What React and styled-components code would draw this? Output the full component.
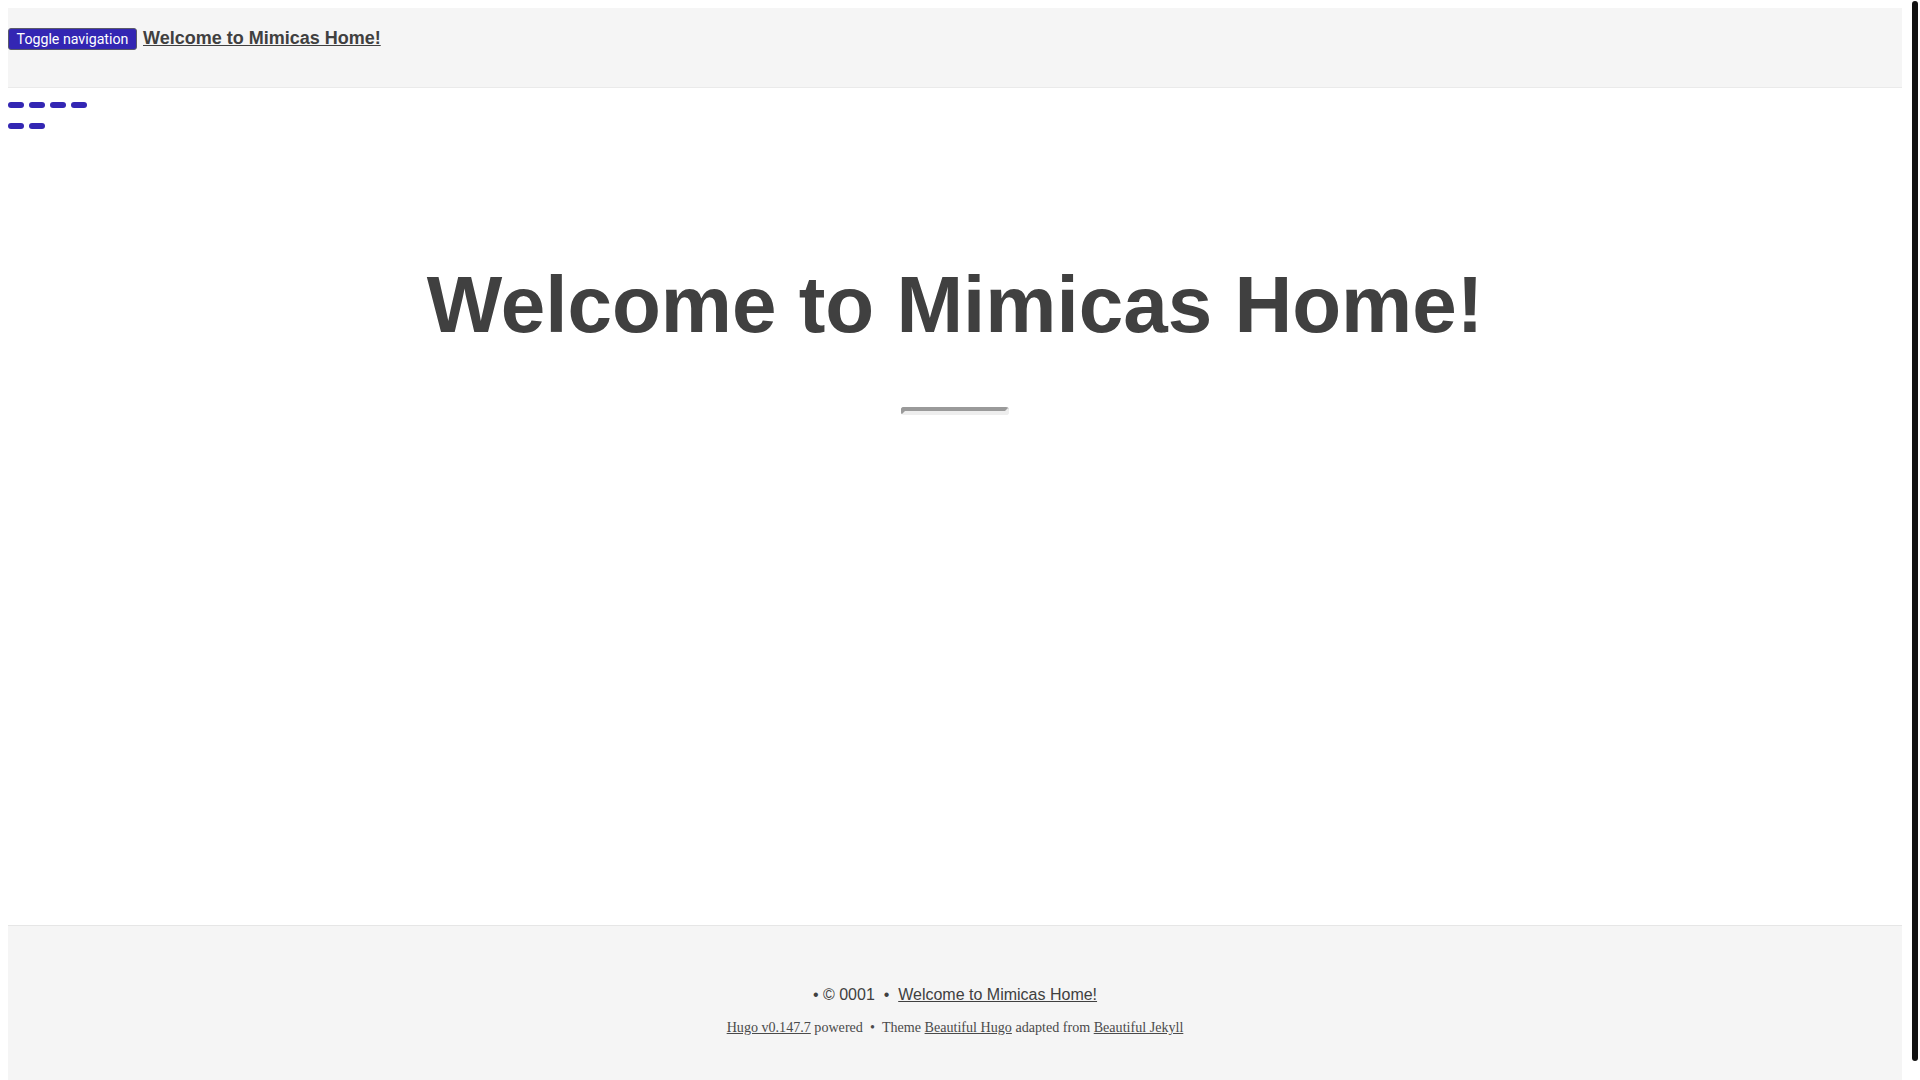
import styled, { createGlobalStyle } from "styled-components";

const GlobalStyle = createGlobalStyle`
	html {
		background: #ffffff;
	}
	body {
		margin: 8px 18px 8px 8px;
		font-family: "Liberation Sans", Arial, sans-serif;
		color: #404040;
		background: #ffffff;
	}
`;

const BLUE = "#3326b3";

export default function App() {
	const dashRows = [4, 2];

	return (
		<>
			<GlobalStyle />
			<Navbar>
				<ToggleButton type="button">Toggle navigation</ToggleButton>
				<Brand href="#">Welcome to Mimicas Home!</Brand>
			</Navbar>
			<Dashes>
				{dashRows.map((count, row) => (
					<DashRow key={row}>
						{Array.from({ length: count }).map((_, i) => (
							<Dash key={i} />
						))}
					</DashRow>
				))}
			</Dashes>
			<Intro>
				<PageHeading>Welcome to Mimicas Home!</PageHeading>
				<SmallRule />
			</Intro>
			<Footer>
				<Copyright>
					• © 0001{"\u00a0 "}•{"\u00a0 "}
					<FooterLink href="#">Welcome to Mimicas Home!</FooterLink>
				</Copyright>
				<Credits>
					<CreditLink href="#">Hugo v0.147.7</CreditLink> powered{"\u00a0 "}•{"\u00a0\u00a0"}Theme{" "}
					<CreditLink href="#">Beautiful Hugo</CreditLink> adapted from{" "}
					<CreditLink href="#">Beautiful Jekyll</CreditLink>
				</Credits>
			</Footer>
			<ScrollTrack>
				<ScrollThumb />
			</ScrollTrack>
		</>
	);
}

const Navbar = styled.nav`
	display: flex;
	align-items: flex-start;
	gap: 6px;
	box-sizing: border-box;
	height: 80px;
	padding-top: 20px;
	background: #f5f5f5;
	border-bottom: 1px solid #eaeaea;
`;

const ToggleButton = styled.button`
	box-sizing: border-box;
	height: 22px;
	width: 129px;
	padding: 0 4px;
	margin: 0;
	background: ${BLUE};
	color: #ffffff;
	border: 1px solid #5a5a6a;
	border-radius: 3px;
	font-family: Roboto, "Noto Sans", sans-serif;
	font-size: 14.2px;
	line-height: 20px;
	white-space: nowrap;
	cursor: pointer;
`;

const Brand = styled.a`
	font-family: "Liberation Sans", Arial, sans-serif;
	font-weight: 700;
	font-size: 18px;
	line-height: 20px;
	color: #404040;
	text-decoration: underline;
`;

const Dashes = styled.div`
	display: flex;
	flex-direction: column;
	gap: 15px;
	padding-top: 14px;
`;

const DashRow = styled.div`
	display: flex;
	gap: 5px;
`;

const Dash = styled.span`
	display: block;
	width: 16px;
	height: 6px;
	border-radius: 3px;
	background: ${BLUE};
`;

const Intro = styled.header`
	display: flex;
	flex-direction: column;
	align-items: center;
	padding-top: 132px;
	padding-bottom: 510px;
`;

const PageHeading = styled.h1`
	margin: 0;
	font-family: "Liberation Sans", Arial, sans-serif;
	font-weight: 700;
	font-size: 80px;
	line-height: 88px;
	color: #404040;
	text-align: center;
`;

const SmallRule = styled.hr`
	box-sizing: content-box;
	width: 100px;
	height: 0;
	margin: 58px 0 0;
	border-style: solid;
	border-width: 4px;
	border-top-color: #9a9a9a;
	border-left-color: #9a9a9a;
	border-right-color: #eeeeee;
	border-bottom-color: #eeeeee;
	border-radius: 3px;
`;

const Footer = styled.footer`
	display: flex;
	flex-direction: column;
	align-items: center;
	gap: 10px;
	padding: 57px 0 54px;
	background: #f5f5f5;
	border-top: 1px solid #e6e6e6;
`;

const Copyright = styled.p`
	margin: 0;
	font-family: "Liberation Sans", Arial, sans-serif;
	font-size: 16px;
	line-height: 24px;
	color: #404040;
`;

const FooterLink = styled.a`
	color: #404040;
	text-decoration: underline;
`;

const Credits = styled.p`
	margin: 0;
	font-family: "Liberation Serif", "Times New Roman", serif;
	font-size: 14.1px;
	line-height: 20px;
	color: #4a4a4a;
`;

const CreditLink = styled.a`
	color: #4a4a4a;
	text-decoration: underline;
`;

/* page scrollbar as it shows in the picture, laid over the right edge */
const ScrollTrack = styled.div`
	position: fixed;
	top: 0;
	right: 0;
	width: 10px;
	height: 100vh;
	background: #ffffff;
`;

const ScrollThumb = styled.div`
	margin: 1px 0 0 2px;
	width: 6px;
	height: 1060px;
	border-radius: 3px;
	background: #111111;
`;
